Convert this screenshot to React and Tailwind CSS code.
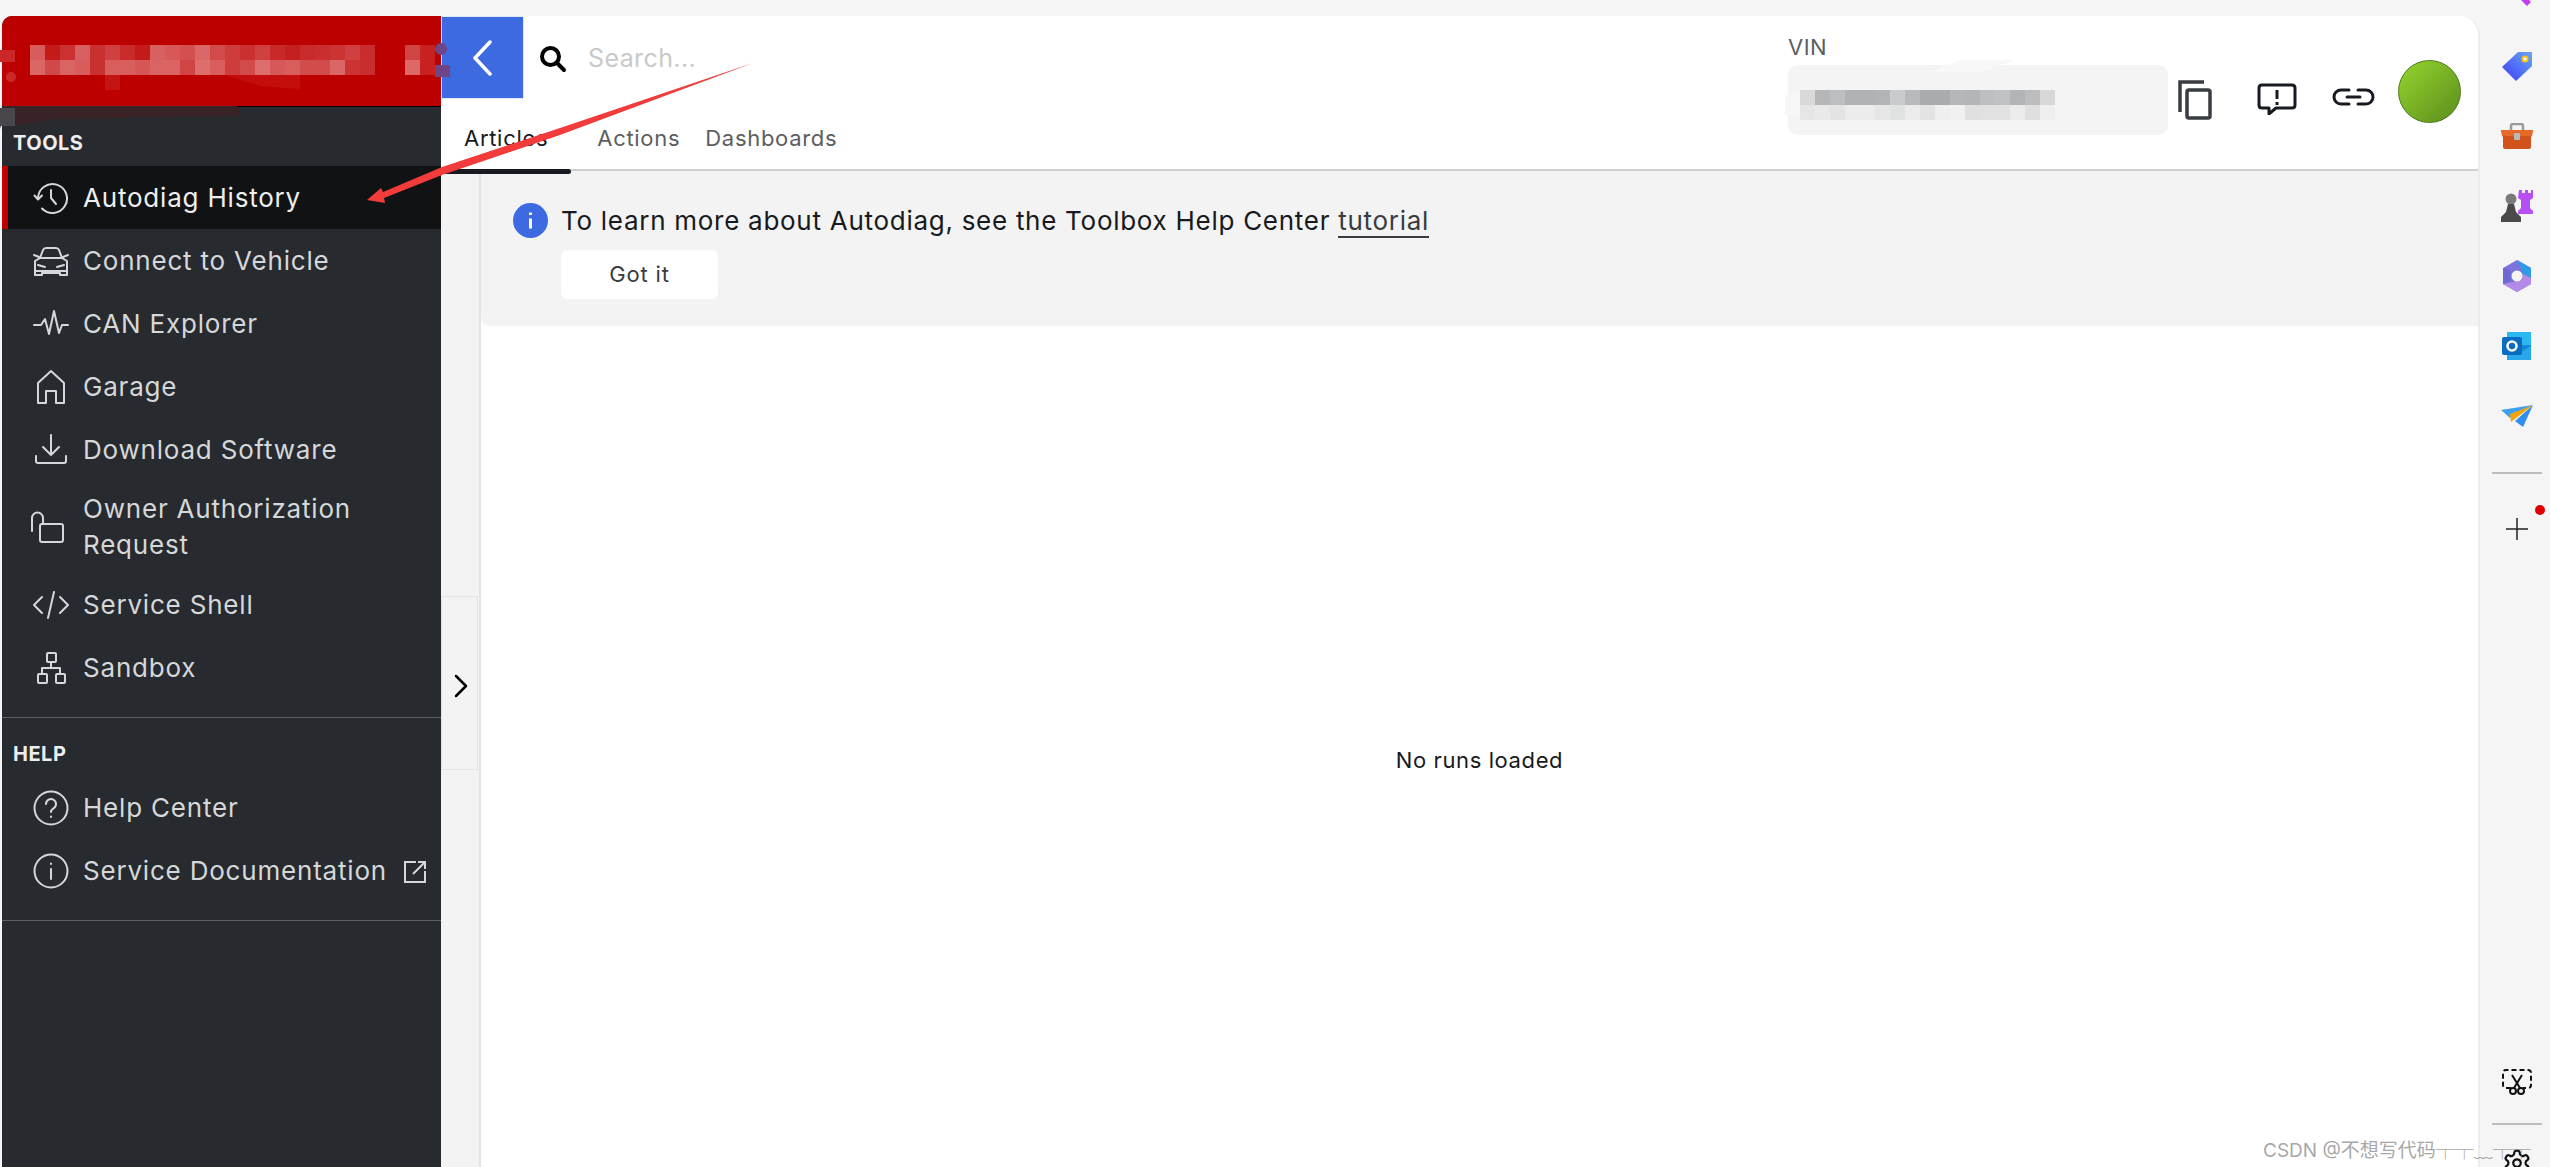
import React from 'react';

const sans = "font-['Inter','Noto_Sans_CJK_SC',sans-serif]";

const redRow1 = ['#d85c5c','#c51a1a','#cc3030','#d96060','#c93030','#d04040','#c92a2a','#c31a1a','#d86060','#d85858','#d45050','#da6868','#d24a4a','#ce3c3c','#ca3030','#d04040','#c82a2a','#c42020','#c92a2a','#ca2e2e','#cc3434','#d04040','#c82c2c'];
const redRow2 = ['#da6666','#d04848','#d96464','#d85c5c','#c93030','#d85e5e','#d85e5e','#d65656','#da6464','#da6464','#d04444','#dc6e6e','#d85e5e','#ce3c3c','#d24a4a','#dc6e6e','#d65858','#d85e5e','#d24c4c','#d24c4c','#da6666','#cc3434','#c92e2e'];
const vinRow1 = ['#d9d9d9','#b6b7b8','#bdbebf','#b1b2b3','#b1b2b3','#b3b4b5','#cacbcc','#b9babb','#aaabac','#aaabac','#b6b7b8','#b4b5b6','#bebfc0','#c1c2c3','#b3b4b5','#bcbdbe','#d8d8d8'];
const vinRow2 = ['#e6e6e6','#e9e9e9','#e3e3e3','#ececec','#ececec','#e6e6e6','#e0e1e1','#ebebeb','#e3e3e3','#efefef','#f1f1f1','#e0e0e0','#e1e1e1','#e1e1e1','#ebebeb','#dfdfdf','#efefef'];

const Ico = ({ children }) => (
  <svg width="36" height="36" viewBox="0 0 36 36" fill="none" stroke="#d6d7d8" strokeWidth="2" strokeLinecap="round" strokeLinejoin="round">
    {children}
  </svg>
);

const icons = {
  history: (
    <Ico>
      <path d="M5 18a14.500 14.500 0 1 1 4 10.500" />
      <path d="M1.500 15.500 5 19.500l4-4" />
      <path d="M18 10v8l5 6" />
    </Ico>
  ),
  car: (
    <Ico>
      <path d="M2 32V18l5-3 3-8q1-2 3-2h10q2 0 3 2l3 8 5 3v14h-7v-2H9v2z" />
      <path d="M7 15h22M5 22l7 2M31 22l-7 2M3 28h30" />
      <path d="M1 12l5 2M35 12l-5 2" />
    </Ico>
  ),
  pulse: (
    <Ico>
      <path d="M1 19h7l4-6 4 15 5-23 5 22 3-8h6" />
    </Ico>
  ),
  home: (
    <Ico>
      <path d="M5 34V14L18 2l13 12v20H23V22h-10v12z" />
    </Ico>
  ),
  download: (
    <Ico>
      <path d="M18 3v20M10 15l8 8 8-8" />
      <path d="M3 24v5q0 2 2 2h26q2 0 2-2v-5" />
    </Ico>
  ),
  lock: (
    <Ico>
      <rect x="10" y="15" width="23" height="18" rx="2" />
      <path d="M2 22V9a5.500 5.500 0 0 1 11 0v5" />
    </Ico>
  ),
  code: (
    <Ico>
      <path d="M9 10l-8 8 8 8M27 10l8 8-8 8M21 5l-6 26" />
    </Ico>
  ),
  tree: (
    <Ico>
      <rect x="14" y="3" width="9" height="9" rx="1" />
      <rect x="5" y="24" width="9" height="9" rx="1" />
      <rect x="23" y="24" width="9" height="9" rx="1" />
      <path d="M18 12v6M9 24v-6h18v6" />
    </Ico>
  ),
  help: (
    <Ico>
      <circle cx="18" cy="18" r="16.500" />
      <path d="M13 14a5 5 0 1 1 7.500 4.400Q18 20 18 22" />
      <path d="M18 26.500v.5" />
    </Ico>
  ),
  info: (
    <Ico>
      <circle cx="18" cy="18" r="16.500" />
      <path d="M18 16v10M18 10.500v.5" />
    </Ico>
  ),
};

const NavRow = ({ icon, active, children, tall, after }) => (
  <div className={`flex items-center border-l-[6px] pl-[25px] ${tall ? 'h-[92px]' : 'h-[63px]'} ${active ? 'border-[#c00000] bg-[#111213] text-[#eeeeee]' : 'border-transparent text-[#d6d7d8]'}`}>
    <span className={`flex w-[36px] shrink-0 justify-center ${tall ? '-ml-[3px] mr-[3px]' : ''}`}>{icons[icon]}</span>
    <span className="ml-[14px] text-[26px] leading-[36px] tracking-[0.8px] whitespace-nowrap">{children}</span>
    {after}
  </div>
);

const RailIcon = ({ children }) => <div className="flex h-[70px] w-full items-center justify-center">{children}</div>;

function Sidebar() {
  return (
    <aside className="ml-[2px] flex w-[439px] shrink-0 flex-col overflow-hidden rounded-tl-[10px] bg-[#272a2f]">
      <div className="h-[91px] shrink-0 border-b border-black bg-[#bc0000]" />
      <div className="h-[59px] pt-[24px] pl-[11px] text-[20px] leading-[24px] font-bold tracking-[0.5px] text-[#eeeeee]">TOOLS</div>
      <NavRow icon="history" active>Autodiag History</NavRow>
      <NavRow icon="car">Connect to Vehicle</NavRow>
      <NavRow icon="pulse">CAN Explorer</NavRow>
      <NavRow icon="home">Garage</NavRow>
      <NavRow icon="download">Download Software</NavRow>
      <NavRow icon="lock" tall>Owner Authorization<br />Request</NavRow>
      <NavRow icon="code">Service Shell</NavRow>
      <NavRow icon="tree">Sandbox</NavRow>
      <div className="mt-[18px] h-[59px] border-t border-[#5c5f63] pt-[24px] pl-[11px] text-[20px] leading-[24px] font-bold tracking-[0.5px] text-[#eeeeee]">HELP</div>
      <NavRow icon="help">Help Center</NavRow>
      <NavRow
        icon="info"
        after={
          <svg className="ml-[16px] mt-[2px] shrink-0" width="24" height="24" viewBox="0 0 24 24" fill="none" stroke="#d6d7d8" strokeWidth="2">
            <path d="M13 2H2v20h20V11M10 14 22 2M15 2h7v7" />
          </svg>
        }
      >
        Service Documentation
      </NavRow>
      <div className="mt-[18px] border-t border-[#5c5f63]" />
    </aside>
  );
}

function Header() {
  return (
    <header className="flex h-[155px] shrink-0 justify-between border-b-2 border-[#cfcfcf] bg-white">
      <div>
        <div className="flex h-[83px] items-center">
          <button className="flex h-[83px] w-[83px] items-center justify-center border border-[#e3e8f5] bg-[#3e6ae1]">
            <svg width="22" height="36" viewBox="0 0 22 36" fill="none" stroke="white" strokeWidth="3.500" strokeLinecap="round" strokeLinejoin="round">
              <path d="M18 2 3 18l15 16" />
            </svg>
          </button>
          <svg className="ml-[15px] mt-[2px]" width="28" height="28" viewBox="0 0 28 28" fill="none" stroke="black" strokeWidth="4" strokeLinecap="round">
            <circle cx="11.500" cy="11.500" r="8.500" />
            <path d="m18 18 7 7" />
          </svg>
          <span className="ml-[21px] pt-[2px] text-[25px] tracking-[0.4px] text-[#c9c9c9]">Search...</span>
        </div>
        <nav className="flex h-[70px] items-center pt-[8px] text-[22px] tracking-[0.7px]">
          <span className="relative px-[23px] text-[#171a20]">
            Articles
            <span className="absolute -bottom-[19px] left-0 h-[5px] w-[130px] rounded-full bg-[#171a20]" />
          </span>
          <span className="ml-[26px] text-[#5c5e62]">Actions</span>
          <span className="ml-[25px] text-[#5c5e62]">Dashboards</span>
        </nav>
      </div>
      <div className="flex items-start pr-[17px]">
        <div className="pt-[19px]">
          <div className="text-[22px] leading-[24px] tracking-[0.5px] text-[#5c5e62]">VIN</div>
          <div className="mt-[6px] h-[70px] w-[380px] rounded-[10px] bg-[#f4f4f4]" />
        </div>
        <svg className="mt-[64px] ml-[10px]" width="34" height="40" viewBox="0 0 34 40" fill="none" stroke="#393c41" strokeWidth="3.500">
          <path d="M2 32V2h24" />
          <rect x="9" y="10" width="23" height="28" rx="2" />
        </svg>
        <svg className="mt-[67px] ml-[45px]" width="40" height="32" viewBox="0 0 40 32" fill="none" stroke="#171a20" strokeWidth="3" strokeLinejoin="round">
          <path d="M5 2h30q3 0 3 3v17q0 3-3 3H19l-7 6v-6H5q-3 0-3-3V5q0-3 3-3z" />
          <path d="M20 7v9M20 19v3" />
        </svg>
        <svg className="mt-[72px] ml-[35px]" width="43" height="18" viewBox="0 0 43 18" fill="none" stroke="#171a20" strokeWidth="3" strokeLinecap="round">
          <path d="M17 2H9a7 7 0 0 0 0 14h8M26 2h8a7 7 0 0 1 0 14h-8M15 9h13" />
        </svg>
        <div className="mt-[44px] ml-[23px] h-[63px] w-[63px] rounded-full border border-[#4d7a17] bg-linear-to-br from-[#94d62e] to-[#5c8d1d]" />
      </div>
    </header>
  );
}

function Banner() {
  return (
    <div className="flex h-[155px] shrink-0 rounded-bl-[8px] bg-[#f3f3f3] pt-[32px] pl-[32px]">
      <svg className="shrink-0" width="35" height="35" viewBox="0 0 35 35">
        <circle cx="17.500" cy="17.500" r="17.500" fill="#3e6ae1" />
        <path d="M17.500 15.500v10M17.500 9.500v2.500" stroke="white" strokeWidth="3" />
      </svg>
      <div className="ml-[13px]">
        <p className="text-[26px] leading-[36px] tracking-[0.72px] text-[#171a20]">
          To learn more about Autodiag, see the Toolbox Help Center{' '}
          <span className="border-b-2 border-[#393c41] text-[#393c41]">tutorial</span>
        </p>
        <button className="mt-[11px] h-[49px] w-[157px] rounded-[6px] bg-white text-[22px] tracking-[0.8px] text-[#393c41]">Got it</button>
      </div>
    </div>
  );
}

function RightRail() {
  return (
    <div className="-mt-[16px] flex w-[70px] shrink-0 flex-col items-center overflow-hidden pl-[3px]">
      <svg className="mt-[-6px] ml-[12px] shrink-0" width="20" height="14" viewBox="0 0 20 14">
        <path d="M4 2l10 10 4-4L8-2z" fill="#c13cf0" />
      </svg>
      <div className="mt-[23px] flex w-full flex-col">
        <RailIcon>
          <svg width="32" height="30" viewBox="0 0 32 30">
            <defs>
              <linearGradient id="tag" x1="0" y1="1" x2="1" y2="0">
                <stop offset="0" stopColor="#3b3cf5" />
                <stop offset="1" stopColor="#6aa6f5" />
              </linearGradient>
            </defs>
            <path d="M1 16 17 1h14v14L15 30z" fill="url(#tag)" />
            <circle cx="24" cy="8" r="3.500" fill="#f5c518" />
            <circle cx="24" cy="8" r="1.500" fill="#fff" />
          </svg>
        </RailIcon>
        <RailIcon>
          <svg width="34" height="26" viewBox="0 0 34 26">
            <path d="M11 7V3q0-2 2-2h8q2 0 2 2v4" fill="none" stroke="#9b9b9b" strokeWidth="2.500" />
            <path d="M1 7h32l-2 8v9q0 2-2 2H5q-2 0-2-2v-9z" fill="#d2521c" />
            <path d="M1 7h32l-1 6H2z" fill="#e56a2a" />
            <rect x="14" y="10" width="6" height="7" rx="1" fill="#b9b9b9" />
          </svg>
        </RailIcon>
        <RailIcon>
          <svg width="33" height="32" viewBox="0 0 33 32">
            <path d="M19 0h3v3h3V0h3v3h3V0h2v8l-3 2v8l3 3v3H18v-3l3-3v-8l-3-2z" fill="#b650f5" />
            <circle cx="11" cy="9" r="5.500" fill="#7a7a7a" />
            <path d="M8 14h6l2 8 5 5v5H1v-5l5-5z" fill="#4a4a4a" />
          </svg>
        </RailIcon>
        <RailIcon>
          <svg width="30" height="32" viewBox="0 0 30 32">
            <path d="M15 0 29 8v16l-14 8-14-8V8z" fill="#7b74da" />
            <path d="M15 0 29 8v10l-8-4-3-8z" fill="#2f9be6" />
            <path d="M1 24l14 8 14-8v-6l-8-4-1 6-8 2z" fill="#b48ae8" />
            <path d="M1 8v16l8-4-1-10z" fill="#6f68d4" />
            <circle cx="15" cy="16" r="5.500" fill="#f5f5f5" />
          </svg>
        </RailIcon>
        <RailIcon>
          <svg width="30" height="30" viewBox="0 0 30 30">
            <rect x="5" y="1" width="24" height="14" fill="#2bb8ee" />
            <rect x="5" y="14" width="24" height="15" rx="1" fill="#1488d8" />
            <path d="M5 15l12 7 12-7v14H5z" fill="#28a8ea" />
            <rect x="0" y="6" width="20" height="18" rx="2" fill="#0a6cc0" />
            <circle cx="10" cy="15" r="4.500" fill="none" stroke="white" strokeWidth="2.500" />
          </svg>
        </RailIcon>
        <RailIcon>
          <svg width="32" height="22" viewBox="0 0 32 22">
            <path d="M0 5 32 0 9 13z" fill="#3aa0f0" />
            <path d="M32 0 9 9l1 8z" fill="#f0a30a" />
            <path d="M32 0 22 22l-8-6z" fill="#2f8fee" />
          </svg>
        </RailIcon>
      </div>
      <div className="mt-[21px] h-[2px] w-[50px] shrink-0 bg-[#bdbdbd]" />
      <div className="relative mt-[44px] shrink-0">
        <svg className="block" width="22" height="22" viewBox="0 0 22 22" stroke="#222222" strokeWidth="1.500">
          <path d="M11 0v22M0 11h22" />
        </svg>
        <span className="absolute -top-[13px] -right-[17px] h-[10px] w-[10px] rounded-full bg-[#e00000]" />
      </div>
      <svg className="mt-auto shrink-0" width="30" height="26" viewBox="0 0 30 26" fill="none" stroke="#111111" strokeWidth="2">
        <path d="M9 19H4q-3 0-3-3V4q0-3 3-3h22q3 0 3 3v12q0 3-3 3h-5" strokeDasharray="5 3" />
        <path d="M10 6l8 13M20 6l-8 13" />
        <circle cx="11" cy="22" r="3" />
        <circle cx="19" cy="22" r="3" />
      </svg>
      <div className="mt-[28px] h-[2px] w-[50px] shrink-0 bg-[#bdbdbd]" />
      <svg className="mt-[23px] mb-[-11px] shrink-0" width="30" height="30" viewBox="0 0 24 24" fill="none" stroke="#111111" strokeWidth="1.800" strokeLinejoin="round">
        <path d="M12.220 2h-.44a2 2 0 0 0-2 2v.18a2 2 0 0 1-1 1.730l-.43.250a2 2 0 0 1-2 0l-.15-.080a2 2 0 0 0-2.730.730l-.22.380a2 2 0 0 0 .730 2.730l.150.100a2 2 0 0 1 1 1.720v.510a2 2 0 0 1-1 1.740l-.150.090a2 2 0 0 0-.730 2.730l.220.380a2 2 0 0 0 2.730.730l.150-.080a2 2 0 0 1 2 0l.430.250a2 2 0 0 1 1 1.730V20a2 2 0 0 0 2 2h.44a2 2 0 0 0 2-2v-.18a2 2 0 0 1 1-1.730l.43-.250a2 2 0 0 1 2 0l.150.080a2 2 0 0 0 2.730-.730l.220-.390a2 2 0 0 0-.730-2.730l-.150-.080a2 2 0 0 1-1-1.740v-.500a2 2 0 0 1 1-1.740l.150-.090a2 2 0 0 0 .730-2.730l-.220-.380a2 2 0 0 0-2.730-.730l-.150.080a2 2 0 0 1-2 0l-.430-.250a2 2 0 0 1-1-1.730V4a2 2 0 0 0-2-2z" />
        <circle cx="12" cy="12" r="3" />
      </svg>
    </div>
  );
}

// scribbles and the red arrow were painted over the screenshot
function Annotations() {
  return (
    <svg className="pointer-events-none absolute inset-0" width="2550" height="1167" viewBox="0 0 2550 1167">
      {redRow1.map((c, i) => <rect key={`a${i}`} x={30 + i * 15} y="45" width="15" height="15" fill={c} />)}
      {redRow2.map((c, i) => <rect key={`b${i}`} x={30 + i * 15} y="60" width="15" height="15" fill={c} />)}
      <rect x="405" y="45" width="15" height="15" fill="#d04444" />
      <rect x="420" y="45" width="15" height="15" fill="#c92020" />
      <rect x="405" y="60" width="15" height="15" fill="#dc6868" />
      <rect x="420" y="60" width="15" height="15" fill="#c92020" />
      <rect x="0" y="50" width="15" height="12" fill="#cc2626" />
      <circle cx="11" cy="77" r="5" fill="#cc2a2a" />
      <rect x="105" y="75" width="15" height="15" fill="#c41414" />
      <path d="M225 75h75v14l-40-3z" fill="#c40e0e" />
      <circle cx="441" cy="49" r="6" fill="#6e4585" />
      <rect x="435" y="65" width="15" height="12" fill="#6e4585" />
      <path d="M2 106h235q5 5 0 10l-180 3-45 7-10-3-2 6H0z" fill="#3a2327" />
      <path d="M0 108h15v18H0z" fill="#49474b" />
      <path d="M1930 72l30-12h55l-35 12z" fill="#f8f8f8" />
      <path d="M1785 96l15-6v25h-15z" fill="#f7f7f7" />
      {vinRow1.map((c, i) => <rect key={`c${i}`} x={1800 + i * 15} y="90" width="15" height="15" fill={c} />)}
      {vinRow2.map((c, i) => <rect key={`d${i}`} x={1800 + i * 15} y="105" width="15" height="15" fill={c} />)}
      <path d="M753 63 560 128 442 167 383 192l-2-4-14 12 18 3-1-5 58-23 118-40z" fill="#f23b3b" />
    </svg>
  );
}

export default function App() {
  return (
    <div className={`relative flex h-[1167px] w-[2550px] overflow-hidden bg-[#f5f5f5] pt-[16px] ${sans}`}>
      <Sidebar />
      <main className="flex min-w-0 flex-1 flex-col overflow-hidden rounded-tr-[20px] border-r-2 border-[#ececec] bg-white">
        <Header />
        <div className="flex flex-1">
          <div className="w-[40px] shrink-0 border-r-2 border-[#e3e3e3] bg-[#f3f3f3] pt-[425px]">
            <div className="flex h-[174px] w-[37px] items-center justify-center border border-[#e3e3e3] bg-[#f3f3f3] pt-[6px] pl-[2px]">
              <svg width="14" height="24" viewBox="0 0 14 24" fill="none" stroke="black" strokeWidth="2.500" strokeLinecap="round" strokeLinejoin="round">
                <path d="m2 2 10 10L2 22" />
              </svg>
            </div>
          </div>
          <div className="flex flex-1 flex-col">
            <Banner />
            <div className="flex flex-1 items-center justify-center pt-[28px] text-[22px] tracking-[0.6px] text-[#171a20]">No runs loaded</div>
          </div>
        </div>
      </main>
      <RightRail />
      <Annotations />
      <div className="absolute top-[1140px] left-[2263px] text-[19px] leading-[22px] whitespace-nowrap text-[#8f8f8f]/80">CSDN @不想写代码┬┬﹏┬┬</div>
    </div>
  );
}
